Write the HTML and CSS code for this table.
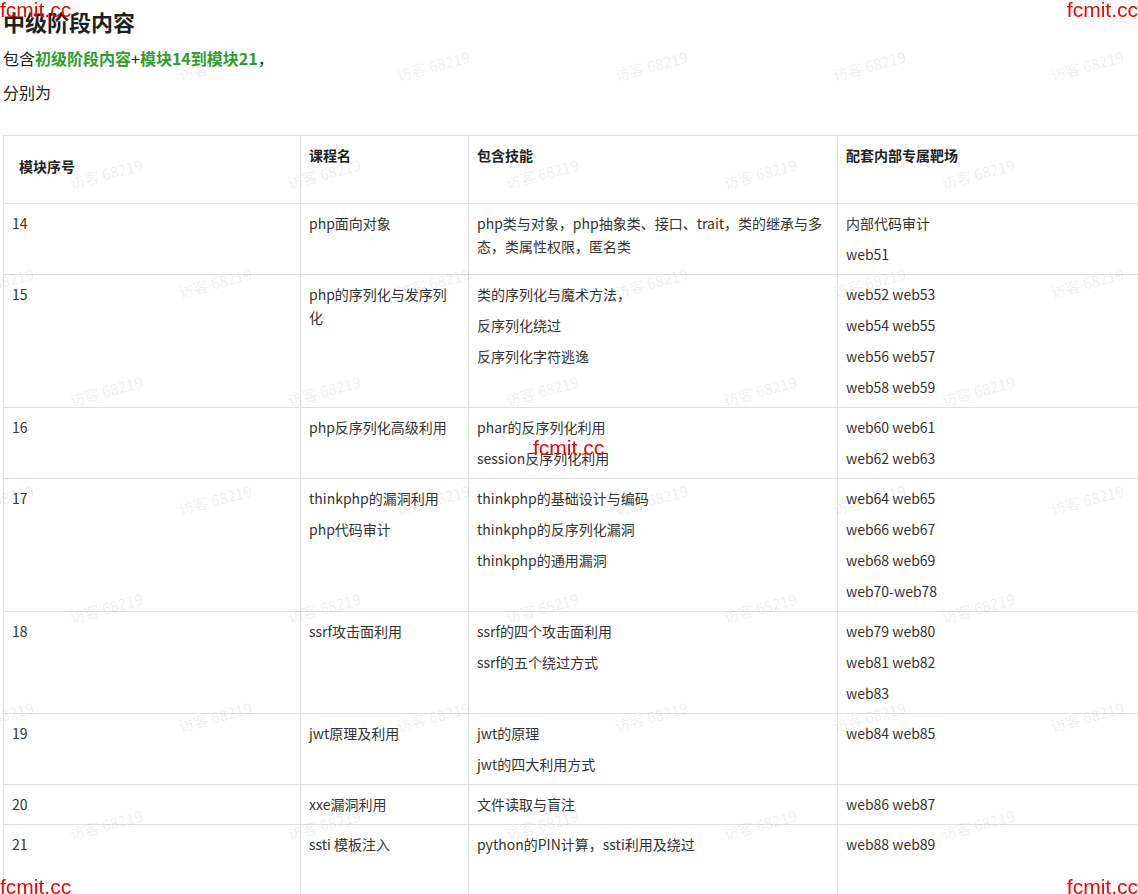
FILE: index.html
```html
<!DOCTYPE html>
<html lang="zh-CN">
<head>
<meta charset="utf-8">
<title>中级阶段内容</title>
<link rel="stylesheet" href="styles.css">
</head>
<body>
<main class="article">
  <h2 class="title">中级阶段内容</h2>
  <p class="intro">包含<strong class="hl">初级阶段内容</strong>+<strong class="hl">模块14到模块21</strong>，</p>
  <p class="intro second">分别为</p>

  <table class="course">
    <colgroup>
      <col class="c1"><col class="c2"><col class="c3"><col class="c4">
    </colgroup>
    <thead>
      <tr>
        <th class="first">模块序号</th>
        <th>课程名</th>
        <th>包含技能</th>
        <th>配套内部专属靶场</th>
      </tr>
    </thead>
    <tbody>
      <tr>
        <td><p>14</p></td>
        <td><p>php面向对象</p></td>
        <td><p>php类与对象，php抽象类、接口、trait，类的继承与多态，类属性权限，匿名类</p></td>
        <td><p>内部代码审计</p><p>web51</p></td>
      </tr>
      <tr>
        <td><p>15</p></td>
        <td><p>php的序列化与发序列化</p></td>
        <td><p>类的序列化与魔术方法，</p><p>反序列化绕过</p><p>反序列化字符逃逸</p></td>
        <td><p>web52 web53</p><p>web54 web55</p><p>web56 web57</p><p>web58 web59</p></td>
      </tr>
      <tr>
        <td><p>16</p></td>
        <td><p>php反序列化高级利用</p></td>
        <td><p>phar的反序列化利用</p><p>session反序列化利用</p></td>
        <td><p>web60 web61</p><p>web62 web63</p></td>
      </tr>
      <tr>
        <td><p>17</p></td>
        <td><p>thinkphp的漏洞利用</p><p>php代码审计</p></td>
        <td><p>thinkphp的基础设计与编码</p><p>thinkphp的反序列化漏洞</p><p>thinkphp的通用漏洞</p></td>
        <td><p>web64 web65</p><p>web66 web67</p><p>web68 web69</p><p>web70-web78</p></td>
      </tr>
      <tr>
        <td><p>18</p></td>
        <td><p>ssrf攻击面利用</p></td>
        <td><p>ssrf的四个攻击面利用</p><p>ssrf的五个绕过方式</p></td>
        <td><p>web79 web80</p><p>web81 web82</p><p>web83</p></td>
      </tr>
      <tr>
        <td><p>19</p></td>
        <td><p>jwt原理及利用</p></td>
        <td><p>jwt的原理</p><p>jwt的四大利用方式</p></td>
        <td><p>web84 web85</p></td>
      </tr>
      <tr>
        <td><p>20</p></td>
        <td><p>xxe漏洞利用</p></td>
        <td><p>文件读取与盲注</p></td>
        <td><p>web86 web87</p></td>
      </tr>
      <tr class="last">
        <td><p>21</p></td>
        <td><p>ssti 模板注入</p></td>
        <td><p>python的PIN计算，ssti利用及绕过</p></td>
        <td><p>web88 web89</p></td>
      </tr>
    </tbody>
  </table>
</main>

<div class="wm-layer" aria-hidden="true">
  <div class="wm-row a"><span>访客 68219</span><span>访客 68219</span><span>访客 68219</span><span>访客 68219</span><span>访客 68219</span><span>访客 68219</span></div>
  <div class="wm-row b"><span>访客 68219</span><span>访客 68219</span><span>访客 68219</span><span>访客 68219</span><span>访客 68219</span></div>
  <div class="wm-row a"><span>访客 68219</span><span>访客 68219</span><span>访客 68219</span><span>访客 68219</span><span>访客 68219</span><span>访客 68219</span></div>
  <div class="wm-row b"><span>访客 68219</span><span>访客 68219</span><span>访客 68219</span><span>访客 68219</span><span>访客 68219</span></div>
  <div class="wm-row a"><span>访客 68219</span><span>访客 68219</span><span>访客 68219</span><span>访客 68219</span><span>访客 68219</span><span>访客 68219</span></div>
  <div class="wm-row b"><span>访客 68219</span><span>访客 68219</span><span>访客 68219</span><span>访客 68219</span><span>访客 68219</span></div>
  <div class="wm-row a"><span>访客 68219</span><span>访客 68219</span><span>访客 68219</span><span>访客 68219</span><span>访客 68219</span><span>访客 68219</span></div>
  <div class="wm-row b"><span>访客 68219</span><span>访客 68219</span><span>访客 68219</span><span>访客 68219</span><span>访客 68219</span></div>
</div>

<div class="mark tl">fcmit.cc</div>
<div class="mark tr">fcmit.cc</div>
<div class="mark center">fcmit.cc</div>
<div class="mark bl">fcmit.cc</div>
<div class="mark br">fcmit.cc</div>
</body>
</html>
```

FILE: styles.css
```css
html {
  overflow: hidden;
  background: #fff;
}

body {
  margin: 0;
  font-family: "Noto Sans CJK SC", "Noto Sans", sans-serif;
  color: #333;
  position: relative;
}

.article {
  padding: 5px 0 0 3px;
}

.title {
  margin: 0;
  font-size: 22px;
  line-height: 33px;
  font-weight: 700;
  color: #1f1f1f;
}

.intro {
  margin: 7px 0 0;
  font-size: 16px;
  line-height: 26px;
  color: #222;
}

.intro.second {
  margin-top: 8px;
}

.hl {
  color: #2e9e2e;
  font-weight: 700;
}

.course {
  margin-top: 30px;
  border-collapse: collapse;
  table-layout: fixed;
  width: 1155px;
  font-size: 14px;
  color: #333;
}

.c1 { width: 297px; }
.c2 { width: 168px; }
.c3 { width: 369px; }
.c4 { width: 321px; }

.course th,
.course td {
  border: 1px solid #dedede;
  padding: 8px 14px 8px 8px;
  vertical-align: top;
  text-align: left;
  line-height: 23px;
}

.course th {
  font-weight: 700;
  color: #222;
  padding-bottom: 36px;
}

.course th.first {
  padding: 19px 8px 25px 15px;
}

.course p {
  margin: 0;
}

.course p + p {
  margin-top: 8px;
}

.course tr.last td {
  height: 120px;
}

/* watermark overlay */
.wm-layer {
  position: absolute;
  top: 10.75px;
  left: 0;
  width: 1138px;
  pointer-events: none;
  display: flex;
  flex-direction: column;
}

.wm-row {
  display: flex;
  height: 108.5px;
}

.wm-row.a { margin-left: -112px; }
.wm-row.b { margin-left: -3px; }

.wm-row span {
  flex: 0 0 218px;
  display: flex;
  align-items: center;
  justify-content: center;
  font-family: "Noto Sans CJK SC", "Noto Sans", sans-serif;
  font-size: 15px;
  color: rgba(0, 0, 0, 0.075);
  transform: rotate(-15deg);
  white-space: nowrap;
}

/* red corner marks */
.mark {
  position: fixed;
  font-family: "Liberation Sans", Arial, sans-serif;
  font-size: 21px;
  line-height: 21px;
  color: #ff0000;
  pointer-events: none;
  white-space: nowrap;
}

.mark.tl { top: -1px; left: 0; }
.mark.tr { top: -1px; right: 0; }
.mark.bl { bottom: -3px; left: 0; }
.mark.br { bottom: -3px; right: 0; }
.mark.center { top: 437px; left: 533px; }
```
